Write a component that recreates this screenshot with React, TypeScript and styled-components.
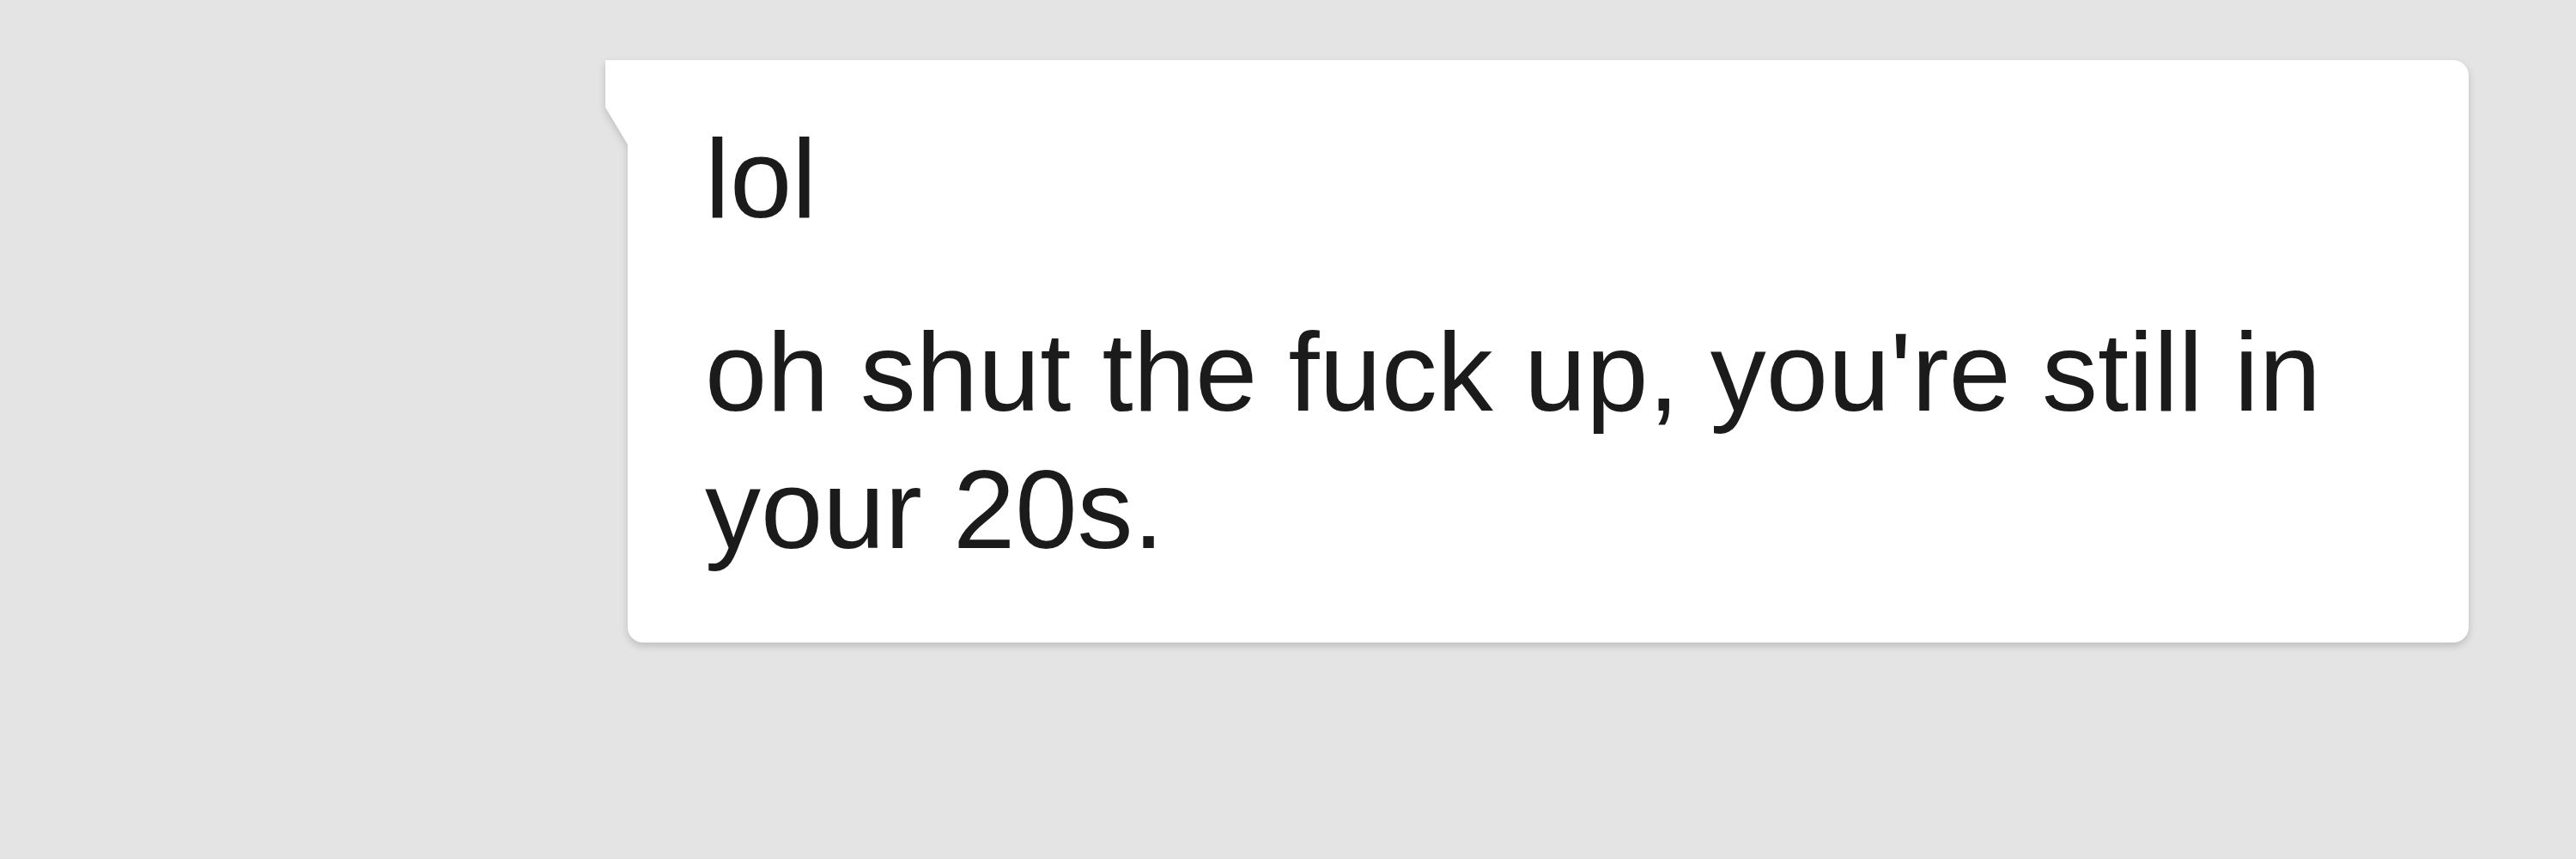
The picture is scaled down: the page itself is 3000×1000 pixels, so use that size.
import React from "react";
import styled, { createGlobalStyle } from "styled-components";

const messages = ["lol", "oh shut the fuck up, you're still in your 20s."];

function App() {
  return (
    <>
      <GlobalStyle />
      <ChatWrap>
        <BubbleWrap>
          <Tail />
          <MessageBubble>
            {messages.map((text, i) => (
              <MessageLine key={i} last={i === messages.length - 1}>
                {text}
              </MessageLine>
            ))}
          </MessageBubble>
        </BubbleWrap>
      </ChatWrap>
    </>
  );
}

const GlobalStyle = createGlobalStyle`
  html, body {
    margin: 0;
    background-color: #e4e4e4;
  }
`;

const ChatWrap = styled.div`
  display: flex;
  flex-direction: row;
  width: 3000px;
  height: 1000px;
  box-sizing: border-box;
  padding: 70px 0 0 731px;
  background-color: #e4e4e4;
`;

const BubbleWrap = styled.div`
  position: relative;
  width: 2144px;
  height: fit-content;
  filter: drop-shadow(0 4px 4px rgba(0, 0, 0, 0.17));
`;

const Tail = styled.div`
  position: absolute;
  left: -26px;
  top: 0;
  width: 27px;
  height: 100px;
  background-color: #ffffff;
  clip-path: polygon(0 0, 100% 0, 100% 100%, 0 55%);
`;

const MessageBubble = styled.div`
  background-color: #ffffff;
  border-radius: 0 18px 18px 18px;
  padding: 58px 90px 75px 90px;
  font-family: "Liberation Sans", Arial, sans-serif;
  font-size: 130px;
  line-height: 160px;
  color: #1b1b1b;
`;

const MessageLine = styled.p<{ last?: boolean }>`
  margin: 0 0 ${(p) => (p.last ? "0" : "65px")} 0;
`;

export default App;
